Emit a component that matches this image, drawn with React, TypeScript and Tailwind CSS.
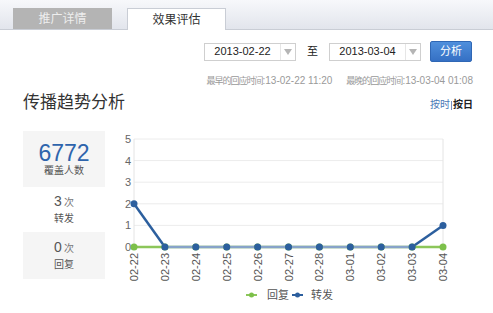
import React from "react";

const dates = ["02-22", "02-23", "02-24", "02-25", "02-26", "02-27", "02-28", "03-01", "03-02", "03-03", "03-04"];
const forwards = [2, 0, 0, 0, 0, 0, 0, 0, 0, 0, 1];
const replies = [0, 0, 0, 0, 0, 0, 0, 0, 0, 0, 0];

const cjk = { fontFamily: '"Liberation Sans", "Noto Sans CJK SC", sans-serif' };

function TrendChart() {
  const left = 24;
  const right = 333;
  const top = 9;
  const bottom = 117;
  const stepX = (right - left) / (dates.length - 1);
  const stepY = (bottom - top) / 5;
  const px = (i: number) => left + i * stepX;
  const py = (v: number) => bottom - v * stepY;

  return (
    <svg width={383} height={183} className="block" style={cjk}>
      {[0, 1, 2, 3, 4, 5].map((v) => (
        <g key={v}>
          <line x1={left} x2={right} y1={py(v)} y2={py(v)} stroke={v === 0 ? "#d8d8d8" : "#ececec"} strokeWidth={1} />
          <text x={21} y={py(v) + 4} textAnchor="end" fontSize={11} fill="#666">
            {v}
          </text>
        </g>
      ))}
      <line x1={left} x2={left} y1={top} y2={bottom} stroke="#e4e4e4" />
      <line x1={right} x2={right} y1={top} y2={bottom} stroke="#e4e4e4" />

      <polyline
        points={replies.map((v, i) => `${px(i)},${py(v)}`).join(" ")}
        fill="none"
        stroke="#8cc65a"
        strokeWidth={2.5}
      />
      <line x1={px(1)} x2={px(9)} y1={py(0)} y2={py(0)} stroke="#87a3c9" strokeWidth={2.5} />
      <line x1={px(0)} x2={px(1)} y1={py(2)} y2={py(0)} stroke="#2c5f9e" strokeWidth={2.5} />
      <line x1={px(9)} x2={px(10)} y1={py(0)} y2={py(1)} stroke="#2c5f9e" strokeWidth={2.5} />

      {replies.map((v, i) => (
        <circle key={"r" + i} cx={px(i)} cy={py(v)} r={3.5} fill="#7cc04a" />
      ))}
      {forwards.map((v, i) => (
        <circle key={"f" + i} cx={px(i)} cy={py(v)} r={3.5} fill="#2c5f9e" />
      ))}

      {dates.map((d, i) => (
        <text
          key={d}
          transform={`translate(${px(i) + 4}, 123) rotate(-90)`}
          textAnchor="end"
          fontSize={11}
          fill="#555"
        >
          {d}
        </text>
      ))}

      <line x1={136} x2={147} y1={165} y2={165} stroke="#8cc65a" strokeWidth={2} />
      <circle cx={141.5} cy={165} r={2.5} fill="#7cc04a" />
      <text x={157} y={169} fontSize={11} fill="#555">回复</text>
      <line x1={182} x2={193} y1={165} y2={165} stroke="#2c5f9e" strokeWidth={2} />
      <circle cx={187.5} cy={165} r={2.5} fill="#2c5f9e" />
      <text x={201} y={169} fontSize={11} fill="#555">转发</text>
    </svg>
  );
}

function DateBox({ value }: { value: string }) {
  return (
    <div className="flex h-[18px] w-[92px] border border-[#cfcfcf] bg-white">
      <div className="flex flex-1 items-center justify-center text-[11px] text-[#222]">{value}</div>
      <div className="flex w-[15px] items-center justify-center border-l border-[#e6e6e6]">
        <div className="h-0 w-0 border-x-[4px] border-t-[6px] border-x-transparent border-t-[#b5b5b5]" />
      </div>
    </div>
  );
}

function ReplyTime({ label, value }: { label: string; value: string }) {
  return (
    <span className="flex items-center">
      <span className="text-[9px] tracking-[-1px]">{label}</span>
      <span className="text-[10px]">{value}</span>
    </span>
  );
}

export default function App() {
  return (
    <div className="h-[313px] w-[493px] overflow-hidden bg-white" style={cjk}>
      <div className="flex h-[30px] items-end gap-[15px] border-b border-[#c9cdd5] bg-gradient-to-b from-[#f7f8fb] to-[#e2e5ec] pl-[13px]">
        <div className="flex h-[21px] w-[99px] items-center justify-center bg-[#b4b4b4] text-[12px] text-[#eeeeee]">
          推广详情
        </div>
        <div className="-mb-px flex h-[22px] w-[99px] items-center justify-center border border-b-0 border-[#c9cdd5] bg-white text-[12px] text-[#333]">
          效果评估
        </div>
      </div>

      <div className="mt-[11px] flex items-center justify-end pr-[21px]">
        <DateBox value="2013-02-22" />
        <span className="mx-[11px] text-[11px] text-[#222]">至</span>
        <DateBox value="2013-03-04" />
        <button className="ml-[9px] flex h-[21px] w-[42px] items-center justify-center rounded-[2px] border border-[#2f67b5] bg-gradient-to-b from-[#4f8fdc] to-[#3570c4] text-[11px] text-white">
          分析
        </button>
      </div>

      <div className="mt-[13px] flex justify-end gap-[14px] pr-[20px] leading-[12px] text-[#9a9a9a]">
        <ReplyTime label="最早的回应时间" value=":13-02-22 11:20" />
        <ReplyTime label="最晚的回应时间" value=":13-03-04 01:08" />
      </div>

      <div className="mt-[6px] flex items-end justify-between pl-[23px] pr-[20px]">
        <div className="text-[17px] leading-[20px] text-[#333]">传播趋势分析</div>
        <div className="mb-[2px] flex items-center text-[10px] leading-[12px]">
          <span className="text-[#4a7ab8]">按时</span>
          <span className="mx-[1px] h-[9px] w-px bg-[#7a8fc0]" />
          <span className="font-bold text-[#222]">按日</span>
        </div>
      </div>

      <div className="mt-[17px] flex">
        <div className="ml-[23px] mt-[1px] flex w-[82px] flex-col">
          <div className="flex h-[56px] flex-col items-center justify-center bg-[#f5f5f5]">
            <div className="text-[23px] leading-[24px] text-[#2e64ac]">6772</div>
            <div className="text-[10px] leading-[12px] text-[#555]">覆盖人数</div>
          </div>
          <div className="flex h-[45px] flex-col items-center justify-center gap-[3px] bg-white">
            <div className="leading-[14px] text-[#555]">
              <span className="text-[14px]">3</span>
              <span className="ml-[2px] text-[10px] text-[#777]">次</span>
            </div>
            <div className="text-[10px] leading-[12px] text-[#555]">转发</div>
          </div>
          <div className="flex h-[47px] flex-col items-center justify-center gap-[3px] bg-[#f5f5f5]">
            <div className="leading-[14px] text-[#555]">
              <span className="text-[14px]">0</span>
              <span className="ml-[2px] text-[10px] text-[#777]">次</span>
            </div>
            <div className="text-[10px] leading-[12px] text-[#555]">回复</div>
          </div>
        </div>
        <div className="ml-[5px]">
          <TrendChart />
        </div>
      </div>
    </div>
  );
}
